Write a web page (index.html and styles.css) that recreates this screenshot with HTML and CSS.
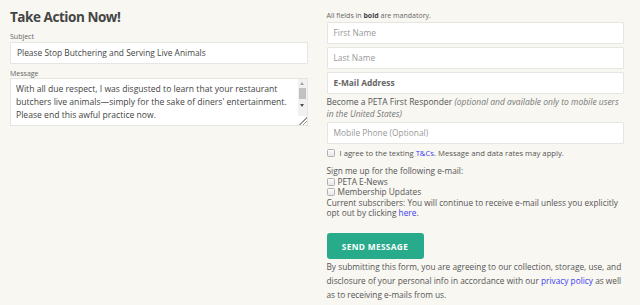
FILE: index.html
```html
<!DOCTYPE html>
<html>
<head>
<meta charset="utf-8">
<link rel="stylesheet" href="styles.css">
</head>
<body>
<div class="page">
  <div class="col left">
    <h1 class="title">Take Action Now!</h1>
    <label class="lbl">Subject</label>
    <div class="field subject">Please Stop Butchering and Serving Live Animals</div>
    <label class="lbl">Message</label>
    <div class="textarea">
      <div class="ta-text">With all due respect, I was disgusted to learn that your restaurant butchers live animals—simply for the sake of diners' entertainment. Please end this awful practice now.</div>
      <div class="scroll">
        <span class="arr up"></span>
        <span class="thumb"></span>
        <span class="arr down"></span>
        <span class="grip"></span>
      </div>
    </div>
  </div>
  <div class="col right">
    <p class="note">All fields in <b>bold</b> are mandatory.</p>
    <div class="field ph">First Name</div>
    <div class="field ph">Last Name</div>
    <div class="field ph bold">E-Mail Address</div>
    <p class="txt responder">Become a PETA First Responder <i>(optional and available only to mobile users in the United States)</i></p>
    <div class="field ph">Mobile Phone (Optional)</div>
    <div class="agree"><span class="cb"></span><span>I agree to the texting <a class="lnk">T&amp;Cs</a>. Message and data rates may apply.</span></div>
    <div class="signup">
      <div>Sign me up for the following e-mail:</div>
      <div class="opt"><span class="cb"></span>PETA E-News</div>
      <div class="opt"><span class="cb"></span>Membership Updates</div>
      <div>Current subscribers: You will continue to receive e-mail unless you explicitly opt out by clicking <a class="lnk">here</a>.</div>
    </div>
    <button class="btn">SEND MESSAGE</button>
    <p class="legal">By submitting this form, you are agreeing to our collection, storage, use, and disclosure of your personal info in accordance with our <a class="lnk">privacy policy</a> as well as to receiving e-mails from us.</p>
  </div>
</div>
</body>
</html>
```
FILE: styles.css
```css
html, body {
  margin: 0;
  padding: 0;
  background: #f8f7f2;
}
body {
  font-family: "Open Sans", "Noto Sans", sans-serif;
  color: #555;
  width: 640px;
  height: 305px;
  overflow: hidden;
}
.page {
  display: flex;
  gap: 19px;
  padding: 0 16px 0 10px;
}
.col.left { width: 298px; }
.col.right { width: 298px; }
.title {
  margin: 8px 0 0;
  font-size: 13.5px;
  line-height: 18px;
  font-weight: 700;
  letter-spacing: -0.45px;
  color: #454545;
}
.lbl {
  display: block;
  font-size: 7px;
  line-height: 9px;
  color: #666;
  margin-top: 5.5px;
  margin-bottom: 1.5px;
}
.textarea + .lbl, .field + .lbl { margin-top: 4.5px; margin-bottom: 0.5px; }
.field {
  box-sizing: border-box;
  height: 22px;
  background: #fff;
  border: 1px solid #e6e6e1;
  border-radius: 1px;
  font-size: 8.4px;
  line-height: 20px;
  padding: 0 6px;
  color: #444;
  white-space: nowrap;
  overflow: hidden;
}
.field.ph { color: #999; }
.field.ph.bold { color: #666; font-weight: 700; }
.field + .field { margin-top: 3px; }
.textarea {
  box-sizing: border-box;
  height: 48px;
  background: #fff;
  border: 1px solid #e6e6e1;
  display: flex;
}
.ta-text {
  flex: 1;
  font-size: 8.6px;
  line-height: 13px;
  padding: 4px 8px 0 5px;
  color: #444;
}
.scroll {
  width: 9px;
  position: relative;
  background: #f1f1f1;
}
.arr {
  position: absolute;
  left: 2px;
  width: 0;
  height: 0;
  border-left: 2.5px solid transparent;
  border-right: 2.5px solid transparent;
}
.arr.up { top: 3px; border-bottom: 3px solid #a3a3a3; }
.arr.down { top: 25px; border-top: 3px solid #505050; }
.thumb {
  position: absolute;
  left: 1px;
  top: 9px;
  width: 7px;
  height: 11px;
  background: #c1c1c1;
}
.grip {
  position: absolute;
  left: 0;
  bottom: 0;
  width: 9px;
  height: 9px;
  background: #fff linear-gradient(135deg, transparent 55%, #999 55%, #999 62%, transparent 62%, transparent 76%, #999 76%, #999 83%, transparent 83%);
}
.note {
  margin: 11px 0 2px;
  font-size: 7px;
  line-height: 9px;
  color: #666;
}
.note b { color: #444; }
.txt, .signup, .legal {
  font-size: 8.3px;
}
.responder {
  margin: 1.5px 0 1.5px;
  line-height: 12.5px;
  font-size: 8.5px;
}
.responder i { color: #777; }
.agree {
  display: flex;
  align-items: center;
  margin-top: 3px;
  font-size: 7.7px;
  line-height: 12px;
}
.agree .cb { margin: 0 5px 0 0; }
.cb {
  display: inline-block;
  box-sizing: border-box;
  width: 8px;
  height: 8px;
  border: 1px solid #b0b0b0;
  border-radius: 1.5px;
  background: linear-gradient(#fdfdfd, #e6e6e6);
  margin-right: 3px;
  vertical-align: -1px;
}
.signup {
  margin-top: 7px;
  line-height: 10.5px;
}
.lnk { color: #3c3cf5; text-decoration: none; }
.btn {
  display: block;
  margin-top: 14.5px;
  width: 97px;
  height: 26px;
  border: 0;
  border-radius: 3px;
  background: #28ab8a;
  color: #fff;
  font-family: "Open Sans", sans-serif;
  font-weight: 700;
  font-size: 8.3px;
  letter-spacing: 0.35px;
  padding: 0;
}
.legal {
  margin: 1px 0 0;
  line-height: 14px;
}
```
